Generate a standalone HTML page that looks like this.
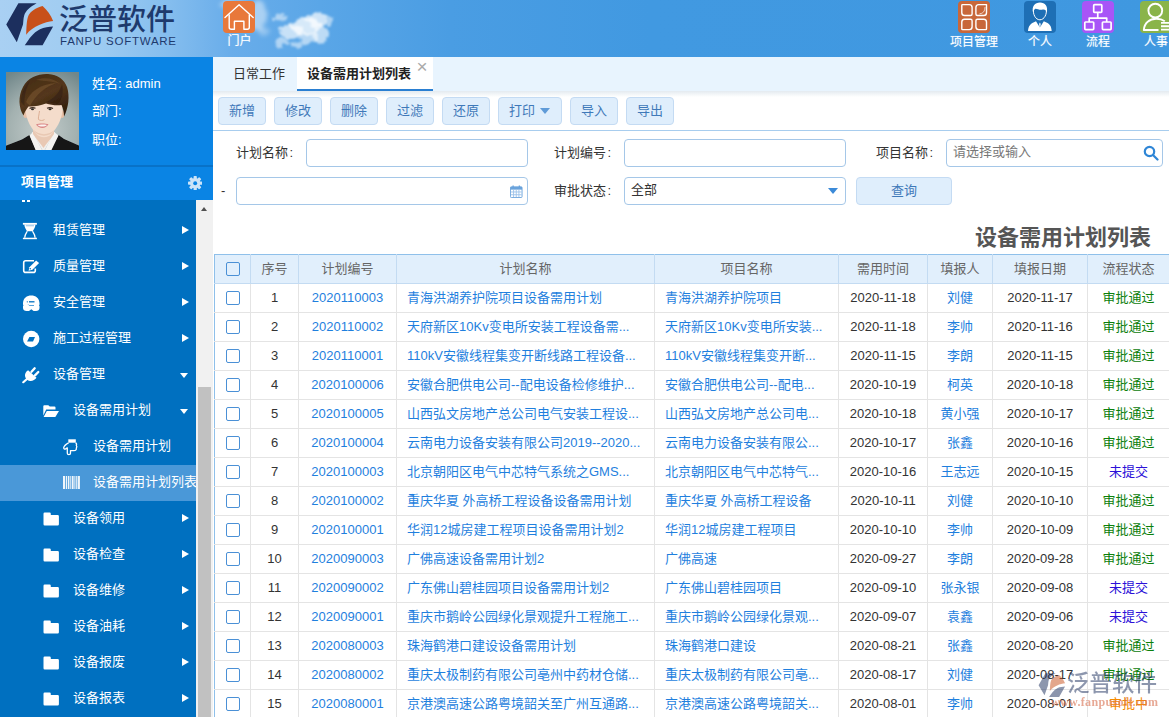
<!DOCTYPE html>
<html lang="zh-CN">
<head>
<meta charset="utf-8">
<title>设备需用计划列表</title>
<style>
*{box-sizing:border-box;margin:0;padding:0}
html,body{width:1169px;height:717px;overflow:hidden;background:#fff}
body{font-family:"Liberation Sans","Noto Sans CJK SC",sans-serif;font-size:13px;color:#333;position:relative}
.abs{position:absolute}
/* header */
#hdr{position:absolute;left:0;top:0;width:1169px;height:57px;background:linear-gradient(90deg,#a9d0f3 0px,#9dcbf1 100px,#84bdee 170px,#69adea 230px,#5aa6e7 320px,#4a9de3 450px,#4199e1 650px,#3f98e0 1169px);overflow:hidden}
#hdr .cloud{position:absolute;border-radius:50%;background:#fff;filter:blur(5px)}
.logo-cn{position:absolute;left:59px;top:1.5px;font-size:29px;line-height:36px;font-weight:500;color:#1e3a6d;letter-spacing:0px;white-space:nowrap}
.logo-en{position:absolute;left:60px;top:33.5px;font-size:11.5px;line-height:14px;color:#1e3a6d;letter-spacing:0.75px;white-space:nowrap}
.hicon{position:absolute;top:1px;width:32px;height:32px;border-radius:4px}
.hlabel{position:absolute;top:33.800px;font-size:12px;line-height:16px;color:#fff;white-space:nowrap;text-align:center;text-shadow:0 0 1px rgba(255,255,255,.5)}
/* sidebar */
#side{position:absolute;left:0;top:57px;width:213px;height:660px;background:#0a84e4;overflow:hidden}
#user{position:absolute;left:0;top:0;width:213px;height:109px}
#user .ln{position:absolute;left:92px;color:#fff;font-size:13px;line-height:18px;white-space:nowrap}
#sdiv{position:absolute;left:0;top:108px;width:213px;height:2px;background:#0872c8}
#mhead{position:absolute;left:0;top:110px;width:213px;height:33px;color:#fff;font-weight:bold;font-size:13px;line-height:30px;padding-left:21px}
#menu{position:absolute;left:0;top:143px;width:196px;height:517px;background:#0070c0;overflow:hidden}
#sbar{position:absolute;left:196px;top:143px;width:17px;height:517px;background:#f1f1f1}
#sbar .thumb{position:absolute;left:2px;top:187px;width:13px;height:340px;background:#c1c1c1}
.mi{position:absolute;left:0;width:196px;height:36px;color:#fff;font-size:13px;line-height:36px;white-space:nowrap}
.mi.act{background:linear-gradient(#0070c0 0,#0070c0 1px,#4a98d8 1px);height:37px}
.mi .tx{position:absolute;top:0}
.mi svg{position:absolute}
.mi .ar{position:absolute;left:182px;top:14px;width:0;height:0;border-left:7px solid #fff;border-top:4.500px solid transparent;border-bottom:4.500px solid transparent}
.mi .ad{position:absolute;left:180px;top:16.500px;width:0;height:0;border-top:5px solid #fff;border-left:4.500px solid transparent;border-right:4.500px solid transparent}
/* main */
#tabs{position:absolute;left:213px;top:57px;width:956px;height:34px;background:#e8f4fe}
#tabs .t1{position:absolute;left:20px;top:0;line-height:33px;font-size:13px;color:#333}
#tabs .t2{position:absolute;left:84px;top:0;width:136px;height:34px;background:#fff;border-bottom:2px solid #2a7fd2;line-height:33px;font-size:13px;font-weight:bold;color:#222;padding-left:10px}
#tabs .x{position:absolute;left:119.500px;top:1px;font-size:19px;line-height:18px;color:#aaa;font-weight:normal}
#tshadow{position:absolute;left:213px;top:91px;width:956px;height:6px;background:linear-gradient(#e4eaf0,#fff)}
.btn{position:absolute;top:97px;height:28px;border:1px solid #c4dbf3;border-radius:4px;background:#dfeefc;color:#3f79b9;font-size:13px;line-height:25px;text-align:center}
#tline{position:absolute;left:213px;top:130px;width:956px;height:1px;background:#a8cdee}
.lab{position:absolute;font-size:13px;line-height:27px;color:#333;white-space:nowrap}
.inp{position:absolute;height:28px;border:1px solid #a5c7e8;border-radius:4px;background:#fff;font-size:13px;line-height:24px;padding-left:6px;color:#333}
#title{position:absolute;right:18px;top:222px;font-size:22px;line-height:32px;font-weight:bold;color:#555;white-space:nowrap}
/* table */
#tb{position:absolute;left:214px;top:254px;border-collapse:collapse;table-layout:fixed;width:955px;font-size:13px}
#tb th{height:29px;background:#e1effc;font-weight:normal;color:#666;border:1px solid #c3dbf2;border-top:1px solid #8fc0ea;text-align:center;white-space:nowrap;overflow:hidden;padding:0 0 4px 0}
#tb td{height:29px;border:1px solid #e4e4e4;text-align:center;white-space:nowrap;overflow:hidden;color:#333;padding:0 0 4px 0}
#tb td.l{text-align:left;padding-left:10px;padding-right:2px;color:#1f7fde}
#tb td.b{color:#1f7fde}
#tb td.n{padding-bottom:2px}
#tb td.c,#tb th.c{padding-bottom:1px}
#tb td.g{color:#0b800b}
#tb td.p{color:#2b10d8}
#tb td.o{color:#f58a00}
#tb tr td:first-child,#tb tr th:first-child{border-left:1px solid #8fc0ea}
.cb{position:relative;left:.5px;top:-.28px;display:inline-block;width:14px;height:14px;border:1px solid #4a90d6;border-radius:2px;background:#fff;vertical-align:middle}
#tb td.l span{display:block;overflow:hidden;white-space:nowrap}
</style>
</head>
<body>
<!-- HEADER -->
<div id="hdr">
  <svg class="abs" style="left:200px;top:0" width="160" height="57" viewBox="200 0 160 57">
    <defs>
      <filter id="cb" x="-30%" y="-30%" width="160%" height="160%"><feTurbulence type="fractalNoise" baseFrequency="0.09" numOctaves="3" seed="4" result="n"/><feDisplacementMap in="SourceGraphic" in2="n" scale="9" xChannelSelector="R" yChannelSelector="G"/><feGaussianBlur stdDeviation="2"/></filter>
      <filter id="cb2" x="-30%" y="-30%" width="160%" height="160%"><feTurbulence type="fractalNoise" baseFrequency="0.11" numOctaves="3" seed="7" result="n"/><feDisplacementMap in="SourceGraphic" in2="n" scale="10" xChannelSelector="R" yChannelSelector="G"/><feGaussianBlur stdDeviation="1.300"/></filter>
    </defs>
    <g fill="#fff" filter="url(#cb)">
      <ellipse cx="258" cy="16" rx="9" ry="15" opacity=".45"/>
      <ellipse cx="234" cy="4" rx="14" ry="4" opacity=".4"/>
      <ellipse cx="263" cy="31" rx="5" ry="6" opacity=".3"/>
    </g>
    <g fill="#fff" filter="url(#cb2)">
      <ellipse cx="317" cy="19" rx="11" ry="8" opacity=".7"/>
      <ellipse cx="305" cy="27" rx="15" ry="9" opacity=".75"/>
      <ellipse cx="291" cy="31" rx="12" ry="7" opacity=".65"/>
      <ellipse cx="321" cy="35" rx="8" ry="8" opacity=".6"/>
      <ellipse cx="309" cy="38" rx="10" ry="6" opacity=".55"/>
      <ellipse cx="283" cy="42" rx="8" ry="4" opacity=".5"/>
      <ellipse cx="297" cy="45" rx="6" ry="3.500" opacity=".5"/>
      <ellipse cx="280" cy="18" rx="8" ry="3" opacity=".5"/>
      <ellipse cx="330" cy="22" rx="4" ry="5" opacity=".5"/>
    </g>
  </svg>
  <svg class="abs" style="left:0;top:0" width="56" height="50" viewBox="0 0 56 50">
    <path d="M18.400 3.300 L36.600 3.300 C30 7 25.500 11 24.200 15.500 C23.200 19 23.400 22 23 24.500 L16.800 42.200 L6.250 24.400 Z" fill="#1c2f5e"/>
    <path d="M42.600 6.100 C47 10 51 15 53.100 21.100 C45 22 33 26 26.200 34.800 C26.500 28 26.500 20 28.500 15.600 C30.500 11.500 35.500 8 42.600 6.100 Z" fill="#c8501a"/>
    <path d="M53.100 26.600 L42.600 45.300 L24.800 45.300 C29 39 33 32.500 40 29.200 C44 27.400 49 26.800 53.100 26.600 Z" fill="#1c2f5e"/>
  </svg>
  <div class="logo-cn">泛普软件</div>
  <div class="logo-en">FANPU SOFTWARE</div>

  <div class="hicon" style="left:223px;width:32px;height:32px;background:#e8783a"></div>
  <svg class="abs" style="left:223px;top:1px" width="32" height="32" viewBox="223 1 32 32" fill="none" stroke="#fff" stroke-width="1.400" stroke-linejoin="round" stroke-linecap="round">
    <path d="M225 17.500 L239.100 4.800 L253.200 17.500"/><path d="M229.200 15 V27.300 Q229.200 29.300 231.200 29.300 H234.400 V21.200 H243.900 V29.300 H247.300 Q249.300 29.300 249.300 27.300 V15"/>
  </svg>
  <div class="hlabel" style="left:219px;width:41px;top:33.300px">门户</div>

  <div class="hicon" style="left:958px;background:#c8673a"></div>
  <svg class="abs" style="left:958px;top:1px" width="32" height="32" viewBox="958 1 32 32" fill="none" stroke="#fff" stroke-width="1.400" stroke-linejoin="round">
    <path d="M962.500 4.600 H969.300 Q972.100 4.600 972.100 7.400 V14 Q972.100 15.500 970.600 15.500 H964.600 Q961.800 15.500 961.800 12.700 V5.300 Q961.800 4.600 962.500 4.600 Z"/>
    <path d="M978.700 4.600 H986.500 V12.700 Q986.500 15.500 983.700 15.500 H977.400 Q975.900 15.500 975.900 14 V7.400 Q975.900 4.600 978.700 4.600 Z"/>
    <path d="M985 7 Q985 13.500 979.500 13.800" stroke-width=".8" opacity=".85"/>
    <path d="M964.600 19.200 H970.600 Q972.100 19.200 972.100 20.700 V26.800 Q972.100 29.600 969.300 29.600 H962.500 Q961.800 29.600 961.800 28.900 V22 Q961.800 19.200 964.600 19.200 Z"/>
    <path d="M977.400 19.200 H983.700 Q986.500 19.200 986.500 22 V28.900 Q986.500 29.600 985.800 29.600 H978.700 Q975.900 29.600 975.900 26.800 V20.700 Q975.900 19.200 977.400 19.200 Z"/>
  </svg>
  <div class="hlabel" style="left:944px;width:60px">项目管理</div>

  <div class="hicon" style="left:1024px;background:#1e6fb5"></div>
  <svg class="abs" style="left:1024px;top:1px" width="32" height="32" viewBox="1024 1 32 32">
    <path d="M1028 31 C1028.500 26 1030 23.500 1036 21.200 L1039.900 27.500 L1043.800 21.200 C1050 23.500 1051.300 26 1051.700 31 Z" fill="#fff"/>
    <path d="M1039.900 22.500 L1039.100 24 L1039.900 30 L1040.700 24 Z" fill="#fff"/>
    <path d="M1033.600 9 C1032.600 14 1035.500 19.800 1039.900 19.800 C1044.300 19.800 1047.200 14 1046.200 9" fill="#1e6fb5" stroke="#fff" stroke-width="1"/>
    <path d="M1033.200 13 C1031.300 6.500 1035 2.600 1040 2.600 C1045 2.600 1048.500 6.500 1046.600 13 C1046.200 10 1045 9.300 1042 9.700 C1039 10.100 1036.500 8.300 1035.300 8.800 C1034 9.500 1033.600 11 1033.200 13 Z" fill="#fff"/>
  </svg>
  <div class="hlabel" style="left:1020px;width:40px">个人</div>

  <div class="hicon" style="left:1082px;background:#a855f7"></div>
  <svg class="abs" style="left:1082px;top:1px" width="32" height="32" viewBox="1082 1 32 32" fill="none" stroke="#fff" stroke-width="1.700" stroke-linejoin="round">
    <rect x="1093.700" y="4.700" width="8.100" height="7.600" rx=".8"/><rect x="1084.800" y="22" width="8.900" height="7.600" rx=".8"/><rect x="1102.400" y="22" width="8.700" height="7.600" rx=".8"/><path d="M1097.750 12.300 V18.100 M1089.200 22 V18.100 H1106.700 V22"/>
  </svg>
  <div class="hlabel" style="left:1078px;width:40px">流程</div>

  <div class="hicon" style="left:1140px;background:#8ab44a"></div>
  <svg class="abs" style="left:1140px;top:1px" width="32" height="32" viewBox="1140 1 32 32" fill="none" stroke="#fff" stroke-width="1.900">
    <circle cx="1155.300" cy="10.600" r="6.900"/><path d="M1164.800 21.300 C1160 17.800 1152 18 1148 21.500 C1145 24 1144 27 1143.800 30 H1158.500" stroke-linejoin="round"/><path d="M1161 22.900 H1172 M1161 26.200 H1172 M1161 29.600 H1172" stroke-width="1.900"/>
  </svg>
  <div class="hlabel" style="left:1144px;width:30px;text-align:left">人事</div>
</div>

<!-- SIDEBAR -->
<div id="side">
  <div id="user">
    <svg class="abs" style="left:6px;top:15px" width="73" height="78" viewBox="0 0 73 78">
      <defs>
        <radialGradient id="avbg" cx="0.5" cy="0.75" r="0.85"><stop offset="0" stop-color="#c3cccb"/><stop offset="0.55" stop-color="#a3b1b0"/><stop offset="1" stop-color="#71878a"/></radialGradient>
        <linearGradient id="avhair" x1="0.2" y1="0" x2="0.8" y2="1"><stop offset="0" stop-color="#432b14"/><stop offset="0.5" stop-color="#54371b"/><stop offset="1" stop-color="#2f1d0d"/></linearGradient>
        <filter id="avb1" x="-10%" y="-10%" width="120%" height="120%"><feGaussianBlur stdDeviation="0.6"/></filter>
        <filter id="avb2" x="-20%" y="-20%" width="140%" height="140%"><feGaussianBlur stdDeviation="1.2"/></filter>
        <clipPath id="avclip"><rect width="73" height="78"/></clipPath>
      </defs>
      <g clip-path="url(#avclip)">
      <rect width="73" height="78" fill="url(#avbg)"/>
      <g filter="url(#avb1)">
        <path d="M-2 80 L-2 74.500 L16 67.500 L23.500 63 L30 78 L44 78 L52.500 63 L58 67 L75 74.500 L75 80 Z" fill="#121214"/>
        <path d="M23.500 63.500 L27 60 L36 78 L30 79 Z M52.500 63.500 L48 60 L39 78 L45 79 Z" fill="#f4f3f1"/>
        <path d="M26 60 L37.500 80 L49 60 Z" fill="#f1efec"/>
        <path d="M27 52 H48 V62 C44 68 40 72 37.500 76 C35 72 31 68 27 62 Z" fill="#e9c9b4"/>
        <ellipse cx="19.500" cy="42" rx="2.300" ry="4" fill="#e6bfa6"/>
        <ellipse cx="56" cy="42" rx="2.300" ry="4" fill="#e6bfa6"/>
        <path d="M19.500 34 C19.500 24 28 20 38 20 C48 20 56.500 24 56.500 34 C57 45 52.500 54 46 61.500 C42 66.500 34 66.500 30 61.500 C23.500 54 19 45 19.500 34 Z" fill="#f4dccb"/>
        <path d="M28 58 C32 63.500 44 63.500 48 58 C45 65.500 31 65.500 28 58 Z" fill="#e3bfa8" opacity=".7"/>
      </g>
      <g filter="url(#avb1)">
        <path d="M23.500 36.500 q3 -1.700 6 -0.200" stroke="#3b2a20" stroke-width="1.100" fill="none"/>
        <path d="M41 36.300 q3 -1.500 6 0.200" stroke="#3b2a20" stroke-width="1.100" fill="none"/>
        <ellipse cx="26.500" cy="37.300" rx="1.500" ry="1" fill="#2a2622"/>
        <ellipse cx="44" cy="37.300" rx="1.500" ry="1" fill="#2a2622"/>
        <path d="M33.500 39 C33 43 32 46 32.500 47.500 C34 48.800 37 48.800 38.500 47.500" stroke="#d9a98f" stroke-width="0.900" fill="none"/>
        <path d="M30 52.500 C33 51.300 39 51.300 42.500 52.300 C40 57 33 57.300 30 52.500 Z" fill="#d98686"/>
        <path d="M31.500 53 C34 52.300 38.500 52.300 41 52.900 C39 55 34 55.200 31.500 53 Z" fill="#fbf3ef"/>
      </g>
      <g filter="url(#avb1)">
        <path d="M17.500 43.500 C12.500 36 12 24 17 15 C22 5 33 1.500 42 2 C52 2.500 58.500 8 61 15 C64 24 62.500 36 58 44.500 C58 40 57 36 55.500 33 C50 33.800 45 32.800 40 31.500 C34 33.800 28 34.800 22.500 34.500 C20.500 37 18.500 40 17.500 43.500 Z" fill="url(#avhair)"/>
        <path d="M20 30 C24 20 34 12 50 11 C40 15 30 22 24 34 Z" fill="#7d5a32" opacity=".5"/>
        <path d="M30 8 C38 5 48 6 54 12 C47 9 38 9 30 8 Z" fill="#7d5a32" opacity=".4"/>
        <path d="M40 30 C48 27 54 20 56 12 C58 20 56 28 52 32 Z" fill="#2e1c0e" opacity=".5"/>
        <path d="M15 30 C15 22 18 14 24 9 C20 16 18 24 18.500 34 Z" fill="#2e1c0e" opacity=".45"/>
      </g>
      </g>
    </svg>
    <div class="ln" style="top:18px">姓名: admin</div>
    <div class="ln" style="top:45px">部门:</div>
    <div class="ln" style="top:73.500px">职位:</div>
  </div>
  <div id="sdiv"></div>
  <div id="mhead">项目管理
    <svg class="abs" style="left:187.900px;top:9px" width="14.400" height="14.400" viewBox="0 0 16 16"><g fill="#cde4f8"><circle cx="8" cy="8" r="5.700"/><rect x="6.200" y="0" width="3.600" height="16" rx=".8"/><rect x="6.200" y="0" width="3.600" height="16" rx=".8" transform="rotate(45 8 8)"/><rect x="6.200" y="0" width="3.600" height="16" rx=".8" transform="rotate(90 8 8)"/><rect x="6.200" y="0" width="3.600" height="16" rx=".8" transform="rotate(135 8 8)"/></g><circle cx="8" cy="8" r="2.200" fill="#0a84e4"/></svg>
  </div>
  <div id="menu">
    <div class="abs" style="left:22px;top:0;width:3px;height:2px;background:#fff"></div><div class="abs" style="left:27px;top:0;width:3px;height:2px;background:#fff"></div>
    <div class="mi" style="top:12px"><svg style="left:22px;top:10px" width="16" height="18" viewBox="22 222 16 18"><path d="M22.900 223.800 H36.900" stroke="#fff" stroke-width="1.800"/><path d="M22.900 238.450 H36.900" stroke="#fff" stroke-width="1.500"/><path d="M24.300 224.500 H35.500 C35.300 228 33.500 229.500 32.800 231.300 H27.000 C26.300 229.500 24.500 228 24.300 224.500 Z" fill="#fff"/><path d="M25.800 225.200 H34 V226.300 H25.800 Z" fill="#9cc6ea"/><path d="M27.300 231.300 C26.500 233 24.700 234.500 24.700 237.800 M32.500 231.300 C33.300 233 35.100 234.500 35.100 237.800" fill="none" stroke="#fff" stroke-width="1.300"/></svg><span class="tx" style="left:53px">租赁管理</span><i class="ar"></i></div>
    <div class="mi" style="top:48px"><svg style="left:22px;top:10px" width="19" height="17" viewBox="22 258 19 17"><path d="M34 260.800 H25.700 a2 2 0 0 0 -2 2 V270.400 a2 2 0 0 0 2 2 H33.300 a2 2 0 0 0 2 -2 V268.600" fill="none" stroke="#fff" stroke-width="1.600"/><path d="M28.600 270.700 L29.400 267.300 L36.100 260.600 L39.100 263.000 L32.400 269.700 Z" fill="#fff"/><circle cx="30.300" cy="268.700" r=".7" fill="#0070c0"/></svg><span class="tx" style="left:53px">质量管理</span><i class="ar"></i></div>
    <div class="mi" style="top:84px"><svg style="left:22px;top:10px" width="19" height="18" viewBox="22 294 19 18"><path d="M23 303.500 C23 298 27 295.400 31.250 295.400 C35.500 295.400 39.500 298 39.500 303.500 V304.500 L39 305.300 L39.500 306.200 V308 C39.500 310 38 311 36 311 H33.600 L31.300 309.200 L29 311 H26.500 C24.500 311 23 310 23 308 V306.200 L23.500 305.300 L23 304.500 Z" fill="#fff"/><path d="M29 301.800 H34.500" stroke="#0070c0" stroke-width="1.300"/><circle cx="27.300" cy="301.800" r=".65" fill="#0070c0"/><path d="M28.300 304.500 L29.300 305.500 H34" stroke="#2a8ad4" stroke-width=".8" fill="none"/></svg><span class="tx" style="left:53px">安全管理</span><i class="ar"></i></div>
    <div class="mi" style="top:120px"><svg style="left:22px;top:10px" width="19" height="18" viewBox="22 330 19 18"><circle cx="31.200" cy="339" r="8.200" fill="#fff"/><path d="M27.100 341.600 L29.400 337 L35 337 L33 341.600 Z" fill="#0070c0"/></svg><span class="tx" style="left:53px">施工过程管理</span><i class="ar"></i></div>
    <div class="mi" style="top:156px"><svg style="left:22px;top:10px" width="19" height="18" viewBox="22 366 19 18"><path d="M23.300 382.200 L27.200 378.700" stroke="#fff" stroke-width="2.200" stroke-linecap="round"/><path d="M28.100 370.200 L36.500 377.800 C35 380 32.500 381.300 30 381 C27.500 380.800 25.300 378.500 25 376 C24.800 373.500 26 371.500 28.100 370.200 Z" fill="#fff"/><path d="M31.500 371.800 L34.700 368.300 M35 375.400 L38.300 372" stroke="#fff" stroke-width="2.300" stroke-linecap="round"/></svg><span class="tx" style="left:53px">设备管理</span><i class="ad"></i></div>
    <div class="mi" style="top:192px"><svg style="left:42px;top:12px" width="18" height="14" viewBox="42 404 18 14"><path d="M43.300 415.500 V406.300 a1 1 0 0 1 1 -1 H48.300 L49.800 406.600 H54.500 a1 1 0 0 1 1 1 V409.600 H46.200 Z" fill="#fff"/><path d="M43.600 416.900 L46.800 410.900 H59 L55.300 416.900 Z" fill="#fff"/></svg><span class="tx" style="left:73px">设备需用计划</span><i class="ad"></i></div>
    <div class="mi" style="top:228px"><svg style="left:62px;top:10px" width="17" height="18" viewBox="62 438 17 18"><rect x="68.300" y="439.300" width="7.500" height="3.400" fill="#fff"/><path d="M68.600 442.900 C66 444.300 64 446.200 63.700 447.700 C63.500 448.800 64.600 449.400 65.600 448.900 L67.300 447.900 V453.200 C67.300 455 70.500 455 70.500 453.200 V450.600 H74 C75.800 450.600 76.700 449.500 76.300 448.100 C77 447.200 77 446.200 76.300 445.400 C76.800 444.400 76.600 443.400 75.600 442.900" fill="none" stroke="#fff" stroke-width="1.300" stroke-linejoin="round"/></svg><span class="tx" style="left:93px">设备需用计划</span></div>
    <div class="mi act" style="top:264px"><svg style="left:63px;top:12px" width="17" height="13" viewBox="63 476 17 13"><g fill="#fff" opacity=".92"><rect x="63" y="476" width="2.200" height="13"/><rect x="66" y="476" width="1" height="13"/><rect x="67.800" y="476" width="1.600" height="13"/><rect x="70.300" y="476" width="1" height="13"/><rect x="72" y="476" width="1.600" height="13"/><rect x="74.400" y="476" width="1" height="13"/><rect x="76.200" y="476" width="1.200" height="13"/><rect x="78" y="476" width="1.900" height="13"/></g></svg><span class="tx" style="left:93px">设备需用计划列表</span></div>
    <div class="mi" style="top:300px"><svg style="left:42px;top:11px" width="18" height="16" viewBox="42 511 18 16"><path d="M43.500 513.700 a1.200 1.200 0 0 1 1.200 -1.200 H49.600 a1.200 1.200 0 0 1 1.200 1.200 V515 H57.700 a1.200 1.200 0 0 1 1.200 1.200 V524.200 a1.200 1.200 0 0 1 -1.200 1.200 H44.700 a1.200 1.200 0 0 1 -1.200 -1.200 Z" fill="#fff"/></svg><span class="tx" style="left:73px">设备领用</span><i class="ar"></i></div>
    <div class="mi" style="top:336px"><svg style="left:42px;top:11px" width="18" height="16" viewBox="42 511 18 16"><path d="M43.500 513.700 a1.200 1.200 0 0 1 1.200 -1.200 H49.600 a1.200 1.200 0 0 1 1.200 1.200 V515 H57.700 a1.200 1.200 0 0 1 1.200 1.200 V524.200 a1.200 1.200 0 0 1 -1.200 1.200 H44.700 a1.200 1.200 0 0 1 -1.200 -1.200 Z" fill="#fff"/></svg><span class="tx" style="left:73px">设备检查</span><i class="ar"></i></div>
    <div class="mi" style="top:372px"><svg style="left:42px;top:11px" width="18" height="16" viewBox="42 511 18 16"><path d="M43.500 513.700 a1.200 1.200 0 0 1 1.200 -1.200 H49.600 a1.200 1.200 0 0 1 1.200 1.200 V515 H57.700 a1.200 1.200 0 0 1 1.200 1.200 V524.200 a1.200 1.200 0 0 1 -1.200 1.200 H44.700 a1.200 1.200 0 0 1 -1.200 -1.200 Z" fill="#fff"/></svg><span class="tx" style="left:73px">设备维修</span><i class="ar"></i></div>
    <div class="mi" style="top:408px"><svg style="left:42px;top:11px" width="18" height="16" viewBox="42 511 18 16"><path d="M43.500 513.700 a1.200 1.200 0 0 1 1.200 -1.200 H49.600 a1.200 1.200 0 0 1 1.200 1.200 V515 H57.700 a1.200 1.200 0 0 1 1.200 1.200 V524.200 a1.200 1.200 0 0 1 -1.200 1.200 H44.700 a1.200 1.200 0 0 1 -1.200 -1.200 Z" fill="#fff"/></svg><span class="tx" style="left:73px">设备油耗</span><i class="ar"></i></div>
    <div class="mi" style="top:444px"><svg style="left:42px;top:11px" width="18" height="16" viewBox="42 511 18 16"><path d="M43.500 513.700 a1.200 1.200 0 0 1 1.200 -1.200 H49.600 a1.200 1.200 0 0 1 1.200 1.200 V515 H57.700 a1.200 1.200 0 0 1 1.200 1.200 V524.200 a1.200 1.200 0 0 1 -1.200 1.200 H44.700 a1.200 1.200 0 0 1 -1.200 -1.200 Z" fill="#fff"/></svg><span class="tx" style="left:73px">设备报废</span><i class="ar"></i></div>
    <div class="mi" style="top:480px"><svg style="left:42px;top:11px" width="18" height="16" viewBox="42 511 18 16"><path d="M43.500 513.700 a1.200 1.200 0 0 1 1.200 -1.200 H49.600 a1.200 1.200 0 0 1 1.200 1.200 V515 H57.700 a1.200 1.200 0 0 1 1.200 1.200 V524.200 a1.200 1.200 0 0 1 -1.200 1.200 H44.700 a1.200 1.200 0 0 1 -1.200 -1.200 Z" fill="#fff"/></svg><span class="tx" style="left:73px">设备报表</span><i class="ar"></i></div>
  </div>
  <div id="sbar"><div class="thumb"></div>
    <div class="abs" style="left:5px;top:7px;width:0;height:0;border-bottom:4px solid #505050;border-left:3.700px solid transparent;border-right:3.700px solid transparent"></div>
  </div>
</div>

<!-- MAIN -->
<div id="tabs">
  <div class="t1">日常工作</div>
  <div class="t2">设备需用计划列表<span class="x">×</span></div>
</div>
<div id="tshadow"></div>
<div class="btn" style="left:218px;width:48px">新增</div>
<div class="btn" style="left:274px;width:48px">修改</div>
<div class="btn" style="left:330px;width:48px">删除</div>
<div class="btn" style="left:386px;width:48px">过滤</div>
<div class="btn" style="left:442px;width:48px">还原</div>
<div class="btn" style="left:498px;width:64px;text-align:left;padding-left:10px">打印<i class="abs" style="left:41px;top:10px;width:0;height:0;border-top:6px solid #5f9bd8;border-left:5px solid transparent;border-right:5px solid transparent"></i></div>
<div class="btn" style="left:570px;width:48px">导入</div>
<div class="btn" style="left:626px;width:48px">导出</div>
<div id="tline"></div>
<div class="lab" style="left:236px;top:139px">计划名称<span style="margin-left:1.500px">:</span></div>
<div class="inp" style="left:306px;top:139px;width:222px"></div>
<div class="lab" style="left:554px;top:139px">计划编号<span style="margin-left:1.500px">:</span></div>
<div class="inp" style="left:624px;top:139px;width:222px"></div>
<div class="lab" style="left:876px;top:139px">项目名称<span style="margin-left:1.500px">:</span></div>
<div class="inp" style="left:946px;top:139px;width:217px;color:#777;font-size:13px">请选择或输入<svg class="abs" style="left:196px;top:5px" width="16" height="16" viewBox="0 0 16 16" fill="none" stroke="#2f86d6" stroke-width="2.200"><circle cx="6.500" cy="6.500" r="4.700"/><path d="M10 10 L14.500 14.500" stroke-linecap="round"/></svg></div>
<div class="lab" style="left:221px;top:177px">-</div>
<div class="inp" style="left:236px;top:177px;width:292px"><svg class="abs" style="left:273px;top:7px" width="12.500" height="13" viewBox="0 0 14 14" preserveAspectRatio="none"><rect x="0.500" y="2" width="13" height="11.500" rx="1" fill="#fff" stroke="#6aa3dc"/><rect x="0.500" y="2" width="13" height="3" fill="#6aa3dc"/><path d="M3.500 0.500 V3 M10.500 0.500 V3" stroke="#6aa3dc" stroke-width="1.500"/><path d="M1 7.500 H13 M1 10.500 H13 M4 5 V13 M7 5 V13 M10 5 V13" stroke="#9cc3ea" stroke-width="1"/></svg></div>
<div class="lab" style="left:554px;top:177px">审批状态<span style="margin-left:1.500px">:</span></div>
<div class="inp" style="left:624px;top:177px;width:222px">全部<i class="abs" style="left:203px;top:10px;width:0;height:0;border-top:6px solid #3b8ad8;border-left:5px solid transparent;border-right:5px solid transparent"></i></div>
<div class="btn" style="left:856px;top:177px;width:96px">查询</div>
<div id="title">设备需用计划列表</div>
<table id="tb"><colgroup><col style="width:36px"><col style="width:48px"><col style="width:98px"><col style="width:258px"><col style="width:184px"><col style="width:89px"><col style="width:65px"><col style="width:95px"><col style="width:82px"></colgroup>
<tr><th class="c"><span class="cb" style="background:transparent"></span></th><th>序号</th><th>计划编号</th><th>计划名称</th><th>项目名称</th><th>需用时间</th><th>填报人</th><th>填报日期</th><th>流程状态</th></tr>
<tr><td class="c"><span class="cb"></span></td><td class="n">1</td><td class="b n">2020110003</td><td class="l"><span>青海洪湖养护院项目设备需用计划</span></td><td class="l"><span>青海洪湖养护院项目</span></td><td class="n">2020-11-18</td><td class="b">刘健</td><td class="n">2020-11-17</td><td class="g">审批通过</td></tr>
<tr><td class="c"><span class="cb"></span></td><td class="n">2</td><td class="b n">2020110002</td><td class="l"><span>天府新区10Kv变电所安装工程设备需...</span></td><td class="l"><span>天府新区10Kv变电所安装...</span></td><td class="n">2020-11-18</td><td class="b">李帅</td><td class="n">2020-11-16</td><td class="g">审批通过</td></tr>
<tr><td class="c"><span class="cb"></span></td><td class="n">3</td><td class="b n">2020110001</td><td class="l"><span>110kV安徽线程集变开断线路工程设备...</span></td><td class="l"><span>110kV安徽线程集变开断...</span></td><td class="n">2020-11-15</td><td class="b">李朗</td><td class="n">2020-11-15</td><td class="g">审批通过</td></tr>
<tr><td class="c"><span class="cb"></span></td><td class="n">4</td><td class="b n">2020100006</td><td class="l"><span>安徽合肥供电公司--配电设备检修维护...</span></td><td class="l"><span>安徽合肥供电公司--配电...</span></td><td class="n">2020-10-19</td><td class="b">柯英</td><td class="n">2020-10-18</td><td class="g">审批通过</td></tr>
<tr><td class="c"><span class="cb"></span></td><td class="n">5</td><td class="b n">2020100005</td><td class="l"><span>山西弘文房地产总公司电气安装工程设...</span></td><td class="l"><span>山西弘文房地产总公司电...</span></td><td class="n">2020-10-18</td><td class="b">黄小强</td><td class="n">2020-10-17</td><td class="g">审批通过</td></tr>
<tr><td class="c"><span class="cb"></span></td><td class="n">6</td><td class="b n">2020100004</td><td class="l"><span>云南电力设备安装有限公司2019--2020...</span></td><td class="l"><span>云南电力设备安装有限公...</span></td><td class="n">2020-10-17</td><td class="b">张鑫</td><td class="n">2020-10-16</td><td class="g">审批通过</td></tr>
<tr><td class="c"><span class="cb"></span></td><td class="n">7</td><td class="b n">2020100003</td><td class="l"><span>北京朝阳区电气中芯特气系统之GMS...</span></td><td class="l"><span>北京朝阳区电气中芯特气...</span></td><td class="n">2020-10-16</td><td class="b">王志远</td><td class="n">2020-10-15</td><td class="p">未提交</td></tr>
<tr><td class="c"><span class="cb"></span></td><td class="n">8</td><td class="b n">2020100002</td><td class="l"><span>重庆华夏 外高桥工程设备设备需用计划</span></td><td class="l"><span>重庆华夏 外高桥工程设备</span></td><td class="n">2020-10-11</td><td class="b">刘健</td><td class="n">2020-10-10</td><td class="g">审批通过</td></tr>
<tr><td class="c"><span class="cb"></span></td><td class="n">9</td><td class="b n">2020100001</td><td class="l"><span>华润12城房建工程项目设备需用计划2</span></td><td class="l"><span>华润12城房建工程项目</span></td><td class="n">2020-10-10</td><td class="b">李帅</td><td class="n">2020-10-09</td><td class="g">审批通过</td></tr>
<tr><td class="c"><span class="cb"></span></td><td class="n">10</td><td class="b n">2020090003</td><td class="l"><span>广佛高速设备需用计划2</span></td><td class="l"><span>广佛高速</span></td><td class="n">2020-09-27</td><td class="b">李朗</td><td class="n">2020-09-28</td><td class="g">审批通过</td></tr>
<tr><td class="c"><span class="cb"></span></td><td class="n">11</td><td class="b n">2020090002</td><td class="l"><span>广东佛山碧桂园项目设备需用计划2</span></td><td class="l"><span>广东佛山碧桂园项目</span></td><td class="n">2020-09-10</td><td class="b">张永银</td><td class="n">2020-09-08</td><td class="p">未提交</td></tr>
<tr><td class="c"><span class="cb"></span></td><td class="n">12</td><td class="b n">2020090001</td><td class="l"><span>重庆市鹅岭公园绿化景观提升工程施工...</span></td><td class="l"><span>重庆市鹅岭公园绿化景观...</span></td><td class="n">2020-09-07</td><td class="b">袁鑫</td><td class="n">2020-09-06</td><td class="p">未提交</td></tr>
<tr><td class="c"><span class="cb"></span></td><td class="n">13</td><td class="b n">2020080003</td><td class="l"><span>珠海鹤港口建设设备需用计划</span></td><td class="l"><span>珠海鹤港口建设</span></td><td class="n">2020-08-21</td><td class="b">张鑫</td><td class="n">2020-08-20</td><td class="g">审批通过</td></tr>
<tr><td class="c"><span class="cb"></span></td><td class="n">14</td><td class="b n">2020080002</td><td class="l"><span>重庆太极制药有限公司亳州中药材仓储...</span></td><td class="l"><span>重庆太极制药有限公司亳...</span></td><td class="n">2020-08-17</td><td class="b">刘健</td><td class="n">2020-08-17</td><td class="g">审批通过</td></tr>
<tr><td class="c"><span class="cb"></span></td><td class="n">15</td><td class="b n">2020080001</td><td class="l"><span>京港澳高速公路粤境韶关至广州互通路...</span></td><td class="l"><span>京港澳高速公路粤境韶关...</span></td><td class="n">2020-08-01</td><td class="b">李帅</td><td class="n">2020-08-01</td><td class="o">审批中</td></tr>
</table>
<!-- watermark -->
<div class="abs" style="left:1036px;top:668px;width:133px;height:49px;pointer-events:none">
  <svg class="abs" style="left:0;top:4px;opacity:.5" width="32" height="26" viewBox="4 1 52 46">
    <path d="M18.400 3.300 L36.600 3.300 C30 7 25.500 11 24.200 15.500 C23.200 19 23.400 22 23 24.500 L16.800 42.200 L6.250 24.400 Z" fill="#1c2f5e"/>
    <path d="M42.600 6.100 C47 10 51 15 53.100 21.100 C45 22 33 26 26.200 34.800 C26.500 28 26.500 20 28.500 15.600 C30.500 11.500 35.500 8 42.600 6.100 Z" fill="#c8501a"/>
    <path d="M53.100 26.600 L42.600 45.300 L24.800 45.300 C29 39 33 32.500 40 29.200 C44 27.400 49 26.800 53.100 26.600 Z" fill="#1c2f5e"/>
  </svg>
  <div class="abs" style="left:31px;top:0;font-size:22.500px;line-height:32px;color:#1c2f5e;opacity:.5;white-space:nowrap;font-weight:500">泛普软件</div>
  <div class="abs" style="left:15px;top:26.500px;font-family:'Liberation Serif',serif;font-weight:bold;font-size:12px;line-height:14px;letter-spacing:.35px;color:#d8704f;opacity:.6;white-space:nowrap">www.fanpusoft.com</div>
</div>
</body>
</html>
